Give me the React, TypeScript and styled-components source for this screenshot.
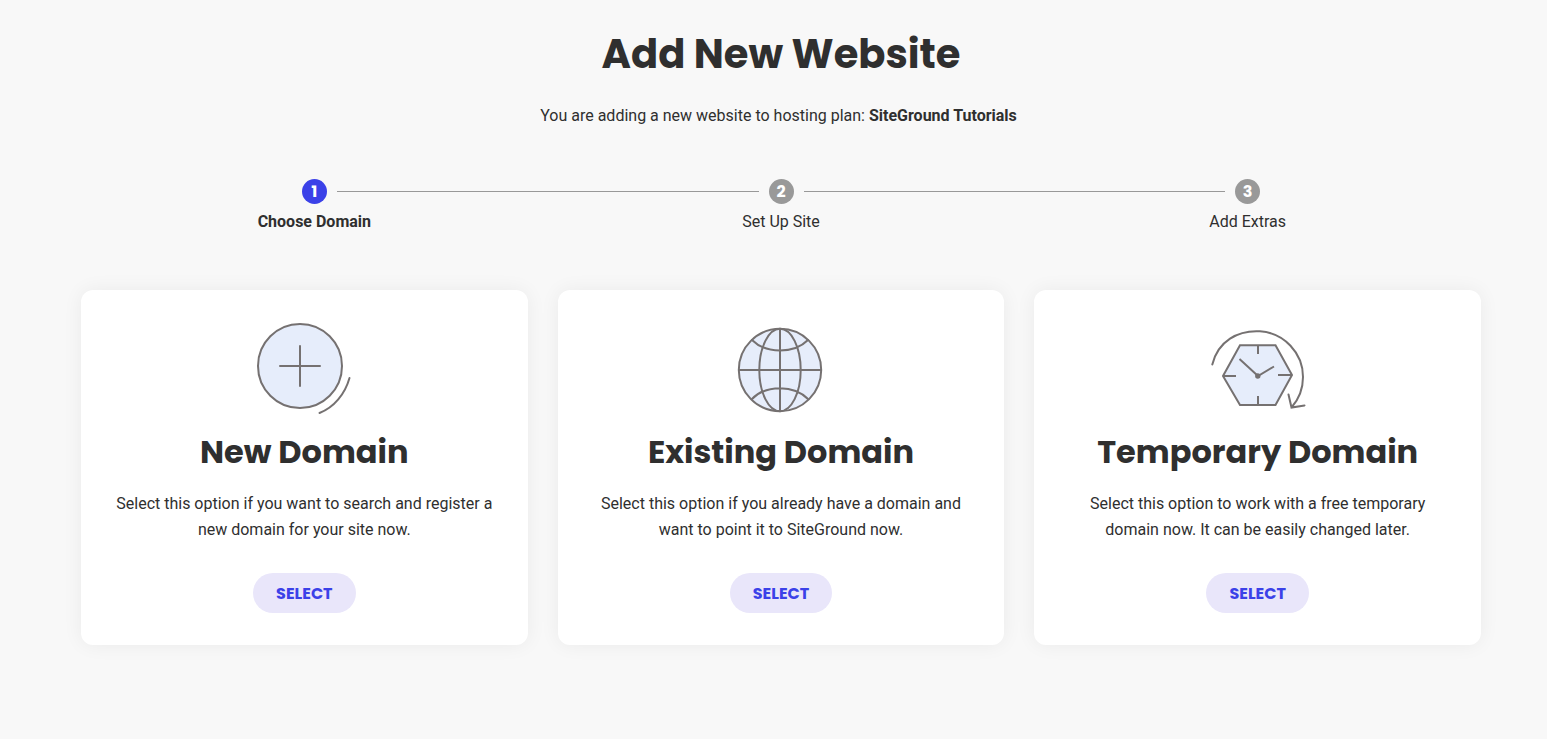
import React from "react";
import styled, { createGlobalStyle } from "styled-components";

const GlobalStyle = createGlobalStyle`
  *, *::before, *::after { box-sizing: border-box; }
  body {
    margin: 0;
    background: #f8f8f8;
    color: #2f2f2f;
    font-family: Roboto, "Liberation Sans", sans-serif;
    font-size: 16px;
    line-height: 26px;
  }
`;

const headingFont = `Poppins, Inter, "Liberation Sans", sans-serif`;

const Page = styled.main`
  padding: 24px 66px 94px 81px;
`;

const Title = styled.h1`
  margin: 0;
  font-family: ${headingFont};
  font-size: 40px;
  font-weight: 700;
  line-height: 60px;
  text-align: center;
`;

const Subtitle = styled.p`
  margin: 19px 0 0;
  padding-right: 5px;
  text-align: center;
`;

const Plan = styled.strong`
  font-weight: 700;
`;

const Steps = styled.ol`
  display: flex;
  margin: 50px 0 0;
  padding: 0;
  list-style: none;
`;

const StepItem = styled.li<{ $active: boolean }>`
  flex: 1;
  text-align: center;
  font-weight: ${(p) => (p.$active ? 700 : 400)};
`;

const StepTrack = styled.div`
  display: flex;
  align-items: center;
  gap: 10px;
  margin-bottom: 5px;
`;

const TrackLine = styled.span<{ $visible: boolean }>`
  flex: 1;
  height: 1px;
  background: ${(p) => (p.$visible ? "#999999" : "transparent")};
`;

const StepNumber = styled.span<{ $active: boolean }>`
  width: 25px;
  height: 25px;
  border-radius: 50%;
  background: ${(p) => (p.$active ? "#3b41e8" : "#999999")};
  color: #ffffff;
  font-family: ${headingFont};
  font-weight: 700;
  line-height: 25px;
`;

const Cards = styled.div`
  display: grid;
  grid-template-columns: repeat(3, 1fr);
  gap: 30px;
  margin-top: 55px;
`;

const Card = styled.section`
  display: flex;
  flex-direction: column;
  align-items: center;
  padding: 20px 30px 32px;
  border-radius: 12px;
  background: #ffffff;
  box-shadow: 0 0 20px rgba(0, 0, 0, 0.06);
  text-align: center;
`;

const Art = styled.svg`
  display: block;
  width: 130px;
  height: 115px;
  fill: none;
  stroke: #757171;
  stroke-width: 2;
  stroke-linecap: round;
`;

const CardTitle = styled.h2`
  margin: 2px 0 0;
  font-family: ${headingFont};
  font-size: 32px;
  font-weight: 700;
  line-height: 50px;
`;

const CardText = styled.p`
  max-width: 386px;
  margin: 14px 0 30px;
`;

const SelectButton = styled.button`
  height: 40px;
  padding: 0 23px;
  border: 0;
  border-radius: 20px;
  background: #e9e6fa;
  color: #3b41e8;
  font-family: ${headingFont};
  font-size: 16px;
  font-weight: 700;
  cursor: pointer;
`;

const tint = "#e6edfb";

const PlusArt = () => (
  <Art viewBox="-1 0 130 115" aria-hidden="true">
    <circle cx="60" cy="56" r="42" fill={tint} />
    <path d="M60 36V76M40 56H80M109.500 68C105 84 94 97.500 79.500 103" />
  </Art>
);

const GlobeArt = () => (
  <Art viewBox="0 0 130 115" aria-hidden="true">
    <circle cx="64" cy="60" r="41.200" fill={tint} />
    <ellipse cx="64" cy="60" rx="20.700" ry="41.200" />
    <path d="M64 19V101M23 60H105M36 30C50 44 78 44 92 30M36 89C50 74.500 78 74.500 92 89" />
  </Art>
);

const ClockArt = () => (
  <Art viewBox="-2 0 130 115" aria-hidden="true">
    <path d="M28 66L45 35.300H80.500L97 65L80.500 95H45Z" fill={tint} />
    <path d="M63 35V44M63 95V86M28 66H41M97 65H83M44.500 49L63 66L79 56.500" strokeLinecap="butt" />
    <circle cx="62.800" cy="66" r="1.700" fill="#757171" />
    <path d="M17.300 54.500C23 31 43 20 65 21.300C89 23 108 43 108 67C108 79 104 89 96.500 97.500M93.500 84.500L96.500 97.500L109.500 95.500" />
  </Art>
);

const steps = ["Choose Domain", "Set Up Site", "Add Extras"];

const options = [
  {
    title: "New Domain",
    text: "Select this option if you want to search and register a new domain for your site now.",
    Icon: PlusArt,
  },
  {
    title: "Existing Domain",
    text: "Select this option if you already have a domain and want to point it to SiteGround now.",
    Icon: GlobeArt,
  },
  {
    title: "Temporary Domain",
    text: "Select this option to work with a free temporary domain now. It can be easily changed later.",
    Icon: ClockArt,
  },
];

export default function App() {
  return (
    <Page>
      <GlobalStyle />
      <Title>Add New Website</Title>
      <Subtitle>
        You are adding a new website to hosting plan: <Plan>SiteGround Tutorials</Plan>
      </Subtitle>
      <Steps>
        {steps.map((label, i) => (
          <StepItem key={label} $active={i === 0} aria-current={i === 0 ? "step" : undefined}>
            <StepTrack>
              <TrackLine $visible={i > 0} />
              <StepNumber $active={i === 0}>{i + 1}</StepNumber>
              <TrackLine $visible={i < steps.length - 1} />
            </StepTrack>
            {label}
          </StepItem>
        ))}
      </Steps>
      <Cards>
        {options.map(({ title, text, Icon }) => (
          <Card key={title}>
            <Icon />
            <CardTitle>{title}</CardTitle>
            <CardText>{text}</CardText>
            <SelectButton type="button">SELECT</SelectButton>
          </Card>
        ))}
      </Cards>
    </Page>
  );
}
